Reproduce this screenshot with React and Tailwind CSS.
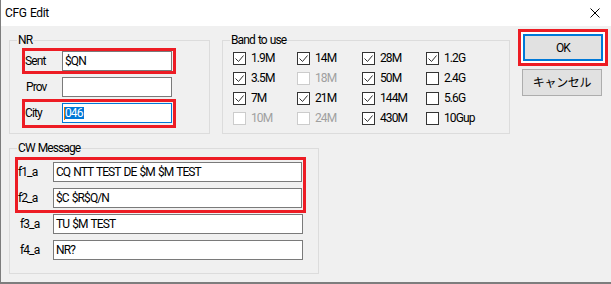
const bands = [
  { label: '1.9M', checked: true },
  { label: '14M', checked: true },
  { label: '28M', checked: true },
  { label: '1.2G', checked: true },
  { label: '3.5M', checked: true },
  { label: '18M', checked: false, disabled: true },
  { label: '50M', checked: true },
  { label: '2.4G', checked: false },
  { label: '7M', checked: true },
  { label: '21M', checked: true },
  { label: '144M', checked: true },
  { label: '5.6G', checked: false },
  { label: '10M', checked: false, disabled: true },
  { label: '24M', checked: false, disabled: true },
  { label: '430M', checked: true },
  { label: '10Gup', checked: false },
];

const Check = ({ label, checked, disabled }) => (
  <div className="flex items-center h-[20px]">
    <div
      className={`w-[13px] h-[13px] border bg-white flex items-center justify-center ${
        disabled ? 'border-[#cccccc]' : 'border-[#333333]'
      }`}
    >
      {checked && (
        <svg width="11" height="11" viewBox="0 0 11 11">
          <path d="M1.5 5.5 L4.5 8.5 L9.5 2.5" fill="none" stroke="#333" strokeWidth="1" />
        </svg>
      )}
    </div>
    <span className={`ml-[5px] ${disabled ? 'text-[#a0a0a0]' : 'text-black'}`}>{label}</span>
  </div>
);

const Group = ({ title, className, children }) => (
  <div className={`relative border border-[#dcdcdc] ${className}`}>
    <span className="absolute -top-[8px] left-[7px] px-[1px] bg-[#f0f0f0] leading-[14px]">{title}</span>
    {children}
  </div>
);

const Field = ({ value, className = '' }) => (
  <div className={`h-[20px] bg-white border border-[#7a7a7a] flex items-center pl-[2px] ${className}`}>
    {value}
  </div>
);

const App = () => {
  return (
    <div
      className="w-[611px] h-[284px] bg-[#f0f0f0] border-l border-b-2 border-[#7d7d7d] flex flex-col text-[12px] tracking-[-0.9px] [word-spacing:1px] text-black overflow-hidden"
      style={{ fontFamily: 'Roboto, "Noto Sans CJK JP", sans-serif' }}
    >
      {/* Title bar */}
      <div className="h-[26px] bg-white flex items-center justify-between pl-[4px] pr-[11px] shrink-0">
        <span className="text-[12px] tracking-[-0.4px]">CFG Edit</span>
        <svg width="10" height="10" viewBox="0 0 10 10">
          <path d="M0.5 0.5 L9.5 9.5 M9.5 0.5 L0.5 9.5" stroke="#000" strokeWidth="1" />
        </svg>
      </div>

      <div className="flex">
        <div className="flex flex-col pl-[8px]">
          <div className="flex mt-[14px] gap-[12px]">
            {/* NR */}
            <Group title="NR" className="w-[201px] h-[94px]">
              <div className="flex flex-col pl-[12px] pt-[7px]">
                <div className="w-[154px] h-[26px] border-[3px] border-[#ed1c24] flex items-center">
                  <span className="w-[37px]">Sent</span>
                  <Field value="$QN" className="w-[110px]" />
                </div>
                <div className="w-[154px] h-[20px] mt-[3px] flex items-center">
                  <span className="w-[40px] pl-[4px]">Prov</span>
                  <Field value="" className="w-[110px]" />
                </div>
                <div className="w-[154px] h-[29px] mt-[2px] border-[3px] border-[#ed1c24] flex items-center pb-[1px]">
                  <span className="w-[37px]">City</span>
                  <div className="w-[110px] h-[20px] bg-white border border-[#0078d7] flex items-center pl-[1px]">
                    <span className="w-[1px] h-[13px] bg-[#e07000]" />
                    <span className="bg-[#0078d7] text-white leading-[12px] pr-[1px]">046</span>
                  </div>
                </div>
              </div>
            </Group>

            {/* Band */}
            <Group title="Band to use" className="w-[288px] h-[94px]">
              <div className="grid grid-cols-[64px_65px_64px_auto] pl-[10px] pt-[7px]">
                {bands.map((b) => (
                  <Check key={b.label} {...b} />
                ))}
              </div>
            </Group>
          </div>

          {/* CW Message */}
          <Group title="CW Message" className="w-[310px] h-[126px] mt-[14px]">
            <div className="flex flex-col pt-[8px]">
              <div className="ml-[5px] w-[291px] border-[3px] border-[#ed1c24] py-[2px] pr-[1px] flex flex-col gap-[6px]">
                <div className="flex items-center">
                  <span className="w-[35px]">f1_a</span>
                  <Field value="CQ NTT TEST DE $M $M TEST" className="w-[250px]" />
                </div>
                <div className="flex items-center">
                  <span className="w-[35px]">f2_a</span>
                  <Field value="$C $R$Q/N" className="w-[250px]" />
                </div>
              </div>
              <div className="flex items-center ml-[8px] mt-[1px]">
                <span className="w-[35px] pl-[2px]">f3_a</span>
                <Field value="TU $M TEST" className="w-[250px]" />
              </div>
              <div className="flex items-center ml-[8px] mt-[6px]">
                <span className="w-[35px] pl-[2px]">f4_a</span>
                <Field value="NR?" className="w-[250px]" />
              </div>
            </div>
          </Group>
        </div>

        {/* Buttons */}
        <div className="flex flex-col ml-[8px] mt-[3px]">
          <div className="border-[3px] border-[#ed1c24] p-[2px] bg-white w-[90px]">
            <button className="w-[80px] h-[27px] bg-[#e1e1e1] border-2 border-[#0078d7] flex items-center justify-center">
              OK
            </button>
          </div>
          <button className="ml-[4px] mt-[3px] w-[80px] h-[27px] bg-[#e1e1e1] border border-[#adadad] flex items-center justify-center tracking-[-0.3px]">
            キャンセル
          </button>
        </div>
      </div>
    </div>
  );
};

export default App;
